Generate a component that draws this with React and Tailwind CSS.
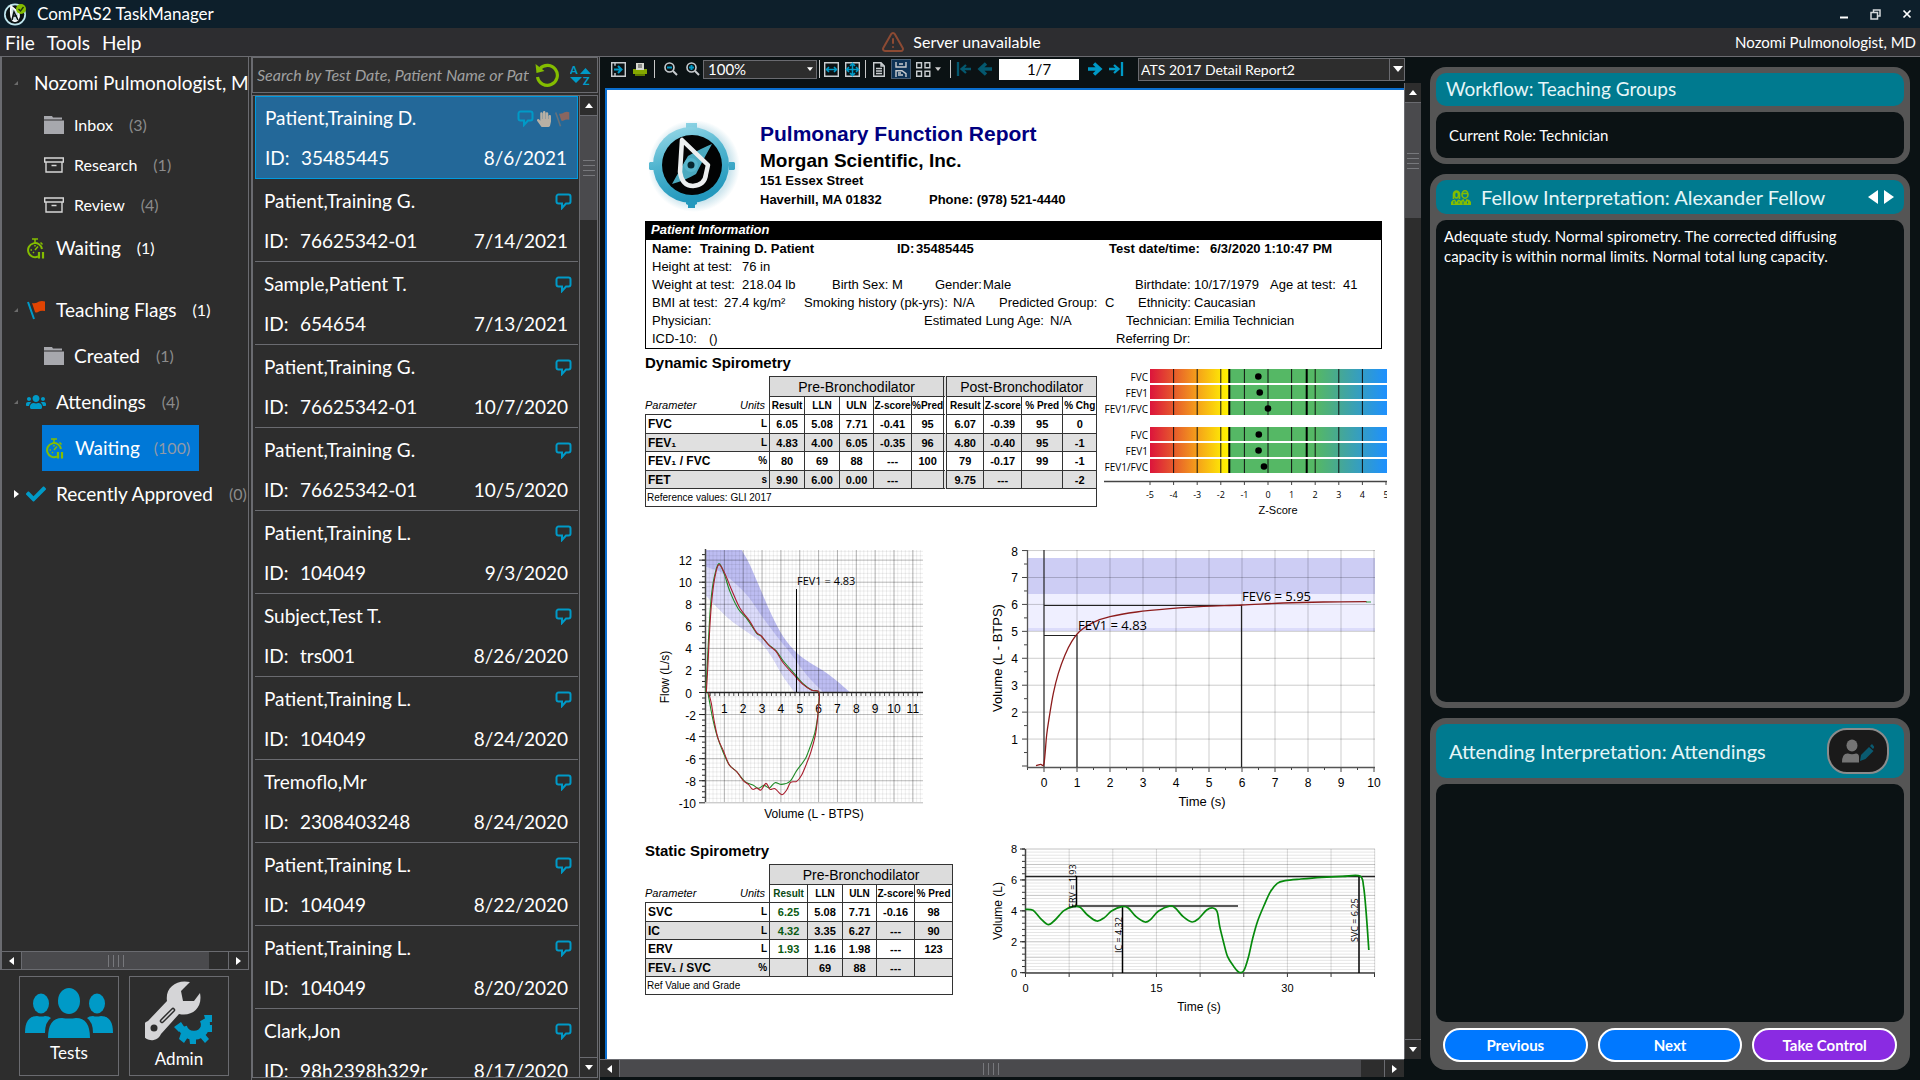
import React from "react";
import { FaCheck, FaHandPaper, FaUsers } from "react-icons/fa";
import { TriangleAlert } from "lucide-react";

/* ---------- geometry helpers for the plots ---------- */

const place = (points, ox, oy, sx, sy) => points.map(([x, y]) => [ox + x / sx, oy + y / sy]);

function smooth(points) {
  let d = `M${points[0][0]} ${points[0][1]}`;
  for (let i = 0; i < points.length - 1; i++) {
    const p0 = points[i - 1] || points[i];
    const p1 = points[i];
    const p2 = points[i + 1];
    const p3 = points[i + 2] || p2;
    d += `C${p1[0] + (p2[0] - p0[0]) / 6} ${p1[1] + (p2[1] - p0[1]) / 6} ${p2[0] - (p3[0] - p1[0]) / 6} ${p2[1] - (p3[1] - p1[1]) / 6} ${p2[0]} ${p2[1]}`;
  }
  return d;
}

const range = (from, to, step = 1) => {
  const out = [];
  for (let v = from; v <= to + 1e-6; v += step) out.push(Math.round(v * 1000) / 1000);
  return out;
};

/* ---------- icons ---------- */

function AppLogo() {
  return (
    <svg viewBox="0 0 24 24" className="size-6" aria-hidden="true">
      <circle cx="12" cy="12.500" r="11" fill="#bfe6ef" />
      <circle cx="12" cy="12.500" r="9.300" fill="#0b1214" />
      <path d="M8 4l8 7c1 6-2 9-5 8s-4-8-3-15z" fill="#cfe0e4" stroke="#fff" strokeWidth="1.500" />
      <path d="M9 18l2-8 4 8M10 14h4" fill="none" stroke="#0b1214" strokeWidth="1.500" />
      <circle cx="18" cy="7" r="5" fill="#84bd00" />
      <path d="M15.500 7l2 2 3-4" stroke="#20340a" strokeWidth="1.300" fill="none" />
    </svg>
  );
}

function ReportLogo() {
  return (
    <svg viewBox="0 0 110 105" className="w-[110px] h-[105px] shrink-0" aria-hidden="true">
      <defs>
        <linearGradient id="ring" x1="0" y1="0" x2="0.3" y2="1">
          <stop offset="0" stopColor="#9fdcea" />
          <stop offset="0.5" stopColor="#4fb4cf" />
          <stop offset="1" stopColor="#2398bd" />
        </linearGradient>
        <radialGradient id="halo">
          <stop offset="0.8" stopColor="#cfe6ee" />
          <stop offset="1" stopColor="#ffffff" />
        </radialGradient>
      </defs>
      <circle cx="54" cy="52" r="46" fill="url(#halo)" />
      <path d="M46 9h11v8H46zM46 86h11v4l-2 1v3h-7v-3l-2-1zM15 56v-8h-5l-1 1v6l1 1zM89 56v-8h5l1 1v6l-1 1z" fill="url(#ring)" />
      <circle cx="51" cy="51" r="38" fill="url(#ring)" />
      <circle cx="52" cy="51" r="30" fill="#020303" />
      <path d="M72 30Q62 34 48 42Q42 52 32 70Q46 66 56 60Q62 48 72 30z" fill="#4aa9bf" />
      <circle cx="51" cy="51" r="7" fill="#57b5cb" />
      <circle cx="51" cy="51" r="3.500" fill="#06272f" />
      <path d="M42 26L40 58Q42 72 53 72Q65 71 66 60L68 51Z" fill="none" stroke="#eceff0" strokeWidth="4.500" strokeLinejoin="round" />
    </svg>
  );
}

const ChatIcon = () => (
  <svg viewBox="0 0 17 17" className="w-[17px] h-[17px] shrink-0" aria-hidden="true">
    <path d="M3.500 1.500h10a2 2 0 0 1 2 2v5a2 2 0 0 1-2 2h-2.500l-4 4.500v-4.500h-3.500a2 2 0 0 1-2-2v-5a2 2 0 0 1 2-2z" fill="none" stroke="#009ac7" strokeWidth="2" />
  </svg>
);

const ArchiveIcon = () => (
  <svg viewBox="0 0 20 16" className="w-5 h-4" aria-hidden="true">
    <path d="M.7 1h18.600v4H.7zM2 5v10h16V5M7.500 8.500h5" fill="none" stroke="#d6d6d6" strokeWidth="1.400" />
  </svg>
);

const FolderIcon = () => (
  <svg viewBox="0 0 20 18" className="w-5 h-[18px]" aria-hidden="true">
    <path d="M0 0h8l1 1.500h9v2H0zM0 4.500h20V18H0z" fill="#a7a8ad" />
  </svg>
);

const StopwatchIcon = () => (
  <svg viewBox="0 0 18 21" className="w-[18px] h-[21px]" aria-hidden="true">
    <path d="M11 18.500A7 7 0 1 1 15 11" fill="none" stroke="#84bd00" strokeWidth="2" />
    <path d="M5 1h6M8 1v4M13.500 4.500l2 2M8 12l3-3.500M3.500 12H5M8 7v1.500M6 15l1-1" stroke="#84bd00" strokeWidth="1.500" fill="none" />
    <path d="M12 14v6.500M16 14v6.500" stroke="#84bd00" strokeWidth="2.200" />
  </svg>
);

const FlagIcon = ({ pole, cloth, size }) => (
  <svg viewBox="0 0 19 20" className={size} aria-hidden="true">
    <path d="M1 2l6 17" stroke={pole} strokeWidth="2" />
    <path d="M5 3Q9 4 12 1.500Q15 .5 18 1.500V11Q14 10 11 12Q9 13 8 12z" fill={cloth} />
  </svg>
);

const FellowsIcon = () => (
  <svg viewBox="0 0 20 15" className="w-5 h-[15px] shrink-0" aria-hidden="true">
    <g fill="none" stroke="#84bd00" strokeWidth="1.600">
      <path d="M2.500 9V4Q3 1 5.500 1T8.500 4V9" />
      <ellipse cx="5.500" cy="5" rx="2" ry="3" />
      <ellipse cx="14" cy="4.500" rx="3" ry="3.700" />
      <path d="M11 3.500h6" />
    </g>
    <path d="M0 15V12Q1 9.500 4 9.500L5.500 12L7 9.500Q9.500 9.500 10 11Q10.500 9.500 12.500 9L14 12L15.500 9Q19 9.500 20 12V15z" fill="#84bd00" />
    <path d="M3 11v3M8 11.500v2M12 11.500v3M16.500 11.500v2" stroke="#007a8f" strokeWidth="1" />
  </svg>
);

const TestsIcon = () => (
  <svg viewBox="0 0 88 50" className="w-[88px] h-[50px]" fill="#009ac7" aria-hidden="true">
    <ellipse cx="44" cy="13" rx="11" ry="13" />
    <path d="M23 50Q23 30 37 30Q44 31 51 30Q65 30 65 50z" />
    <ellipse cx="16" cy="15.500" rx="8" ry="10" />
    <path d="M0 45Q0 28 12 28Q17 29 20 28Q24 28 26 30Q20 34 20 45z" />
    <ellipse cx="72" cy="15.500" rx="8" ry="10" />
    <path d="M88 45Q88 28 76 28Q71 29 68 28Q64 28 62 30Q68 34 68 45z" />
  </svg>
);

const AdminIcon = () => (
  <svg viewBox="0 0 68 63" className="w-[68px] h-[63px]" aria-hidden="true">
    <path d="M45 1C31-2 20 7 22 20L3 40A10 10 0 1 0 16 53L34 33C47 36 58 27 55 12L49 20L38 20L36 10Z" fill="#d5d5d7" />
    <circle cx="9" cy="47" r="3.500" fill="#2d2d2d" />
    <path d="M28 29L17 40" stroke="#2d2d2d" strokeWidth="4.500" strokeLinecap="round" />
    <path d="M28 29L17 40" stroke="#d5d5d7" strokeWidth="1.500" strokeLinecap="round" />
    <path d="M37.500 46A12 12 0 0 0 60 47A12 12 0 0 0 59 38" fill="none" stroke="#009ac7" strokeWidth="9" />
    <path d="M29 46l7-5 4 6-6 4zM36 52l7 4-4 6-5-4zM44 55h7v8h-6zM54 55l5-3 5 6-4 4zM60 44h7v7h-6zM59 34h8v7h-6z" fill="#009ac7" />
  </svg>
);

const StepIcon = ({ back, bar, color }) => (
  <svg viewBox="0 0 16 14" className="w-4 h-3.5" aria-hidden="true">
    <g transform={back ? "translate(16 0) scale(-1 1)" : undefined} fill="none" stroke={color}>
      {bar ? (
        <path d="M1 7h8M6 3l4.500 4L6 11M14 0v14" strokeWidth="2.300" />
      ) : (
        <path d="M1 7h11M7 1.500L13 7l-6 5.500" strokeWidth="3.400" />
      )}
    </g>
  </svg>
);

/* ---------- scroll bars ---------- */

const TRI = {
  up: "M0 5h8L4 0z",
  down: "M0 0h8L4 5z",
  left: "M5 0v8L0 4z",
  right: "M0 0v8l5-4z",
};

const Tri = ({ dir }) => (
  <svg viewBox={dir === "up" || dir === "down" ? "0 0 8 5" : "0 0 5 8"} className={dir === "up" || dir === "down" ? "w-2 h-[5px]" : "w-[5px] h-2"} aria-hidden="true">
    <path d={TRI[dir]} fill="#fff" />
  </svg>
);

function VScroll({ width, thumb }) {
  return (
    <div className={`${width} shrink-0 flex flex-col bg-[#2d2d2d] border-l border-[#6a6b70]`}>
      <button aria-label="Scroll up" className="h-5 flex items-center justify-center border-b border-[#6a6b70]"><Tri dir="up" /></button>
      <div className="flex-1">
        <div className={`${thumb} bg-[#4a4a4d] flex flex-col items-center justify-center gap-1`}>
          {range(1, 4).map((i) => <span key={i} className="w-3 h-px bg-[#77787c]" />)}
        </div>
      </div>
      <button aria-label="Scroll down" className="h-5 flex items-center justify-center border-t border-[#6a6b70]"><Tri dir="down" /></button>
    </div>
  );
}

function HScroll({ thumb }) {
  return (
    <div className="h-[18px] shrink-0 flex bg-[#2d2d2d] border-t border-[#6a6b70]">
      <button aria-label="Scroll left" className="w-5 flex items-center justify-center border-r border-[#6a6b70]"><Tri dir="left" /></button>
      <div className="flex-1 flex">
        <div className={`${thumb} bg-[#4a4a4d] flex items-center justify-center gap-1`}>
          {range(1, 4).map((i) => <span key={i} className="h-3 w-px bg-[#77787c]" />)}
        </div>
      </div>
      <button aria-label="Scroll right" className="w-5 flex items-center justify-center border-l border-[#6a6b70]"><Tri dir="right" /></button>
    </div>
  );
}

/* ---------- left column ---------- */

function TreeRow({ indent, height = "h-[46px]", icon, label, count, small, bright, mark }) {
  return (
    <div className={`${height} flex items-center whitespace-nowrap`}>
      <span className="w-4 ml-2 pl-1 shrink-0 flex">
        {mark === "open" && <svg viewBox="0 0 4 4" className="size-1"><path d="M4 0v4H0z" fill="#6b6b6b" /></svg>}
        {mark === "closed" && <Tri dir="right" />}
      </span>
      {icon && <span className={`${indent} w-6 shrink-0 flex justify-center`}>{icon}</span>}
      <span className={`ml-2 ${small ? "text-base" : "text-[19px]"}`}>{label}</span>
      {count && <span className={`ml-4 ${bright ? "text-white" : "text-[#8b8b8b]"} text-base`}>{count}</span>}
    </div>
  );
}

function Sidebar() {
  return (
    <aside className="w-[251px] shrink-0 flex flex-col bg-[#2d2d2d]">
      <nav className="flex-1 min-h-0 flex flex-col border-l-2 border-r border-b border-[#6a6b70] overflow-hidden mr-0.5">
        <div className="flex-1 pt-1 overflow-hidden">
          <TreeRow height="h-11" mark="open" label="Nozomi Pulmonologist, MD" />
          <TreeRow indent="ml-4" height="h-10" icon={<FolderIcon />} label="Inbox" count="(3)" small />
          <TreeRow indent="ml-4" height="h-10" icon={<ArchiveIcon />} label="Research" count="(1)" small />
          <TreeRow indent="ml-4" height="h-10" icon={<ArchiveIcon />} label="Review" count="(4)" small />
          <TreeRow indent="-ml-0.5" icon={<StopwatchIcon />} label="Waiting" count="(1)" bright />
          <div className="h-4" />
          <TreeRow mark="open" indent="-ml-0.5" icon={<FlagIcon pole="#009ac7" cloth="#e04403" size="w-[19px] h-5" />} label="Teaching Flags" count="(1)" bright />
          <TreeRow indent="ml-4" icon={<FolderIcon />} label="Created" count="(1)" />
          <TreeRow mark="open" indent="-ml-0.5" icon={<FaUsers className="size-5 text-[#009ac7]" />} label="Attendings" count="(4)" />
          <div className="ml-10 w-[157px] h-[46px] bg-[#0078d7] flex items-center pl-1 whitespace-nowrap">
            <StopwatchIcon />
            <span className="ml-[11px] text-[19px]">Waiting</span>
            <span className="ml-3.5 text-base text-[#8f9aa8]">(100)</span>
          </div>
          <TreeRow mark="closed" indent="-ml-0.5" icon={<FaCheck className="size-5 text-[#009ac7]" />} label="Recently Approved" count="(0)" />
        </div>
        <HScroll thumb="w-[91%]" />
      </nav>
      <div className="h-[110px] shrink-0 flex gap-2.5 pt-1.5 pl-[19px]">
        <button className="w-[100px] h-[100px] border border-[#6a6b70] flex flex-col items-center pt-[11px] text-[17px]">
          <TestsIcon />
          <span className="mt-0.5">Tests</span>
        </button>
        <button className="w-[100px] h-[100px] border border-[#6a6b70] flex flex-col items-center pt-1 text-[17px]">
          <AdminIcon />
          <span className="mt-0.5">Admin</span>
        </button>
      </div>
    </aside>
  );
}

/* ---------- patient list ---------- */

const PATIENTS = [
  ["Patient,Training D.", "35485445", "8/6/2021"],
  ["Patient,Training G.", "76625342-01", "7/14/2021"],
  ["Sample,Patient T.", "654654", "7/13/2021"],
  ["Patient,Training G.", "76625342-01", "10/7/2020"],
  ["Patient,Training G.", "76625342-01", "10/5/2020"],
  ["Patient,Training L.", "104049", "9/3/2020"],
  ["Subject,Test T.", "trs001", "8/26/2020"],
  ["Patient,Training L.", "104049", "8/24/2020"],
  ["Tremoflo,Mr", "2308403248", "8/24/2020"],
  ["Patient,Training L.", "104049", "8/22/2020"],
  ["Patient,Training L.", "104049", "8/20/2020"],
  ["Clark,Jon", "98h2398h329r", "8/17/2020"],
];

function PatientList() {
  return (
    <section className="w-[348px] shrink-0 flex flex-col bg-[#2d2d2d] border-l border-[#6a6b70] pb-0.5 pr-px">
      <div className="h-9 shrink-0 flex items-center border border-[#6a6b70] pl-1 pr-1.5">
        <input aria-label="Search" placeholder="Search by Test Date, Patient Name or Patient ID" className="flex-1 min-w-0 bg-transparent italic text-base text-white placeholder:text-[#a0a0a0] outline-none" />
        <button aria-label="Refresh" className="ml-1.5">
          <svg viewBox="0 0 24 24" className="size-6"><path d="M5 5.500A10 10 0 1 1 2.500 14" fill="none" stroke="#84bd00" strokeWidth="3.200" /><path d="M.5 1l1 9 8-2z" fill="#84bd00" /></svg>
        </button>
        <button aria-label="Sort" className="ml-[11px]">
          <svg viewBox="0 0 21 21" className="size-[21px]">
            <text x="0" y="9" fontSize="11" fontWeight="900" fill="#009ac7" fontFamily="Lato">A</text>
            <text x="13" y="20" fontSize="11" fontWeight="900" fill="#009ac7" fontFamily="Lato">Z</text>
            <path d="M10 9h11l-5.500-6zM0 12h12l-6 6z" fill="#009ac7" />
          </svg>
        </button>
      </div>
      <div className="mt-0.5 flex-1 min-h-0 flex border border-[#6a6b70]">
        <ul className="flex-1 min-w-0 overflow-hidden pl-0.5 pr-px">
          {PATIENTS.map(([name, id, date], i) => (
            <li key={i}>
              <button className={`w-full h-[83px] block text-left text-[19px] pl-[9px] pr-2.5 ${i === 0 ? "pt-0.5 bg-[#236899] border border-[#009be0]" : "pt-[3px] border-b border-[#6a6b70]"}`}>
                <span className="h-8 flex items-center justify-between">
                  <span>{name}</span>
                  <span className="flex items-center gap-0.5 -mr-1">
                    <ChatIcon />
                    {i === 0 && <FaHandPaper className="size-4 text-[#b8b0a4]" />}
                    {i === 0 && <FlagIcon pole="#65727c" cloth="#8a6660" size="w-[17px] h-4" />}
                  </span>
                </span>
                <span className="mt-2 h-8 flex items-center">
                  <span className="w-9">ID:</span>
                  <span className="flex-1">{id}</span>
                  <span>{date}</span>
                </span>
              </button>
            </li>
          ))}
        </ul>
        <VScroll width="w-[18px]" thumb="h-[104px]" />
      </div>
    </section>
  );
}

/* ---------- toolbar ---------- */

const Sep = ({ gap }) => <span className={`w-px h-[18px] bg-[#c8c8c8] ${gap}`} />;

function Toolbar() {
  return (
    <div className="h-6 mb-0.5 shrink-0 flex items-center pl-[11px] text-[15px] whitespace-nowrap">
      <button aria-label="Toggle panel">
        <svg viewBox="0 0 15 15" className="size-[15px]"><path d="M.7.700h13.600v13.600H.7zM4 .7v3M4 11v3" fill="none" stroke="#c9cdd0" strokeWidth="1.400" /><path d="M3 7.500h7M7 4l3.500 3.500L7 11" fill="none" stroke="#009ac7" strokeWidth="2" /></svg>
      </button>
      <button aria-label="Print" className="ml-[7px]">
        <svg viewBox="0 0 14 14" className="size-3.5"><path d="M0 7h14v5H0z" fill="#84a800" /><path d="M3 1h8v7H3z" fill="#d7d9d0" /><path d="M5 3h4M5 5h4" stroke="#444" /><path d="M2 12h10v2H2z" fill="#5d7a00" /></svg>
      </button>
      <Sep gap="mx-[7px]" />
      <button aria-label="Zoom out" className="ml-0.5">
        <svg viewBox="0 0 14 14" className="size-3.5"><circle cx="5.500" cy="5.500" r="4.500" fill="none" stroke="#c9cdd0" strokeWidth="1.600" /><path d="M9 9l4 4" stroke="#c9cdd0" strokeWidth="2" /><path d="M3 5.500h5" stroke="#009ac7" strokeWidth="2" /></svg>
      </button>
      <button aria-label="Zoom in" className="ml-2">
        <svg viewBox="0 0 14 14" className="size-3.5"><circle cx="5.500" cy="5.500" r="4.500" fill="none" stroke="#c9cdd0" strokeWidth="1.600" /><path d="M9 9l4 4" stroke="#c9cdd0" strokeWidth="2" /><path d="M3 5.500h5M5.500 3v5" stroke="#009ac7" strokeWidth="2" /></svg>
      </button>
      <span className="ml-[3px] relative">
        <select aria-label="Zoom level" className="appearance-none block w-[114px] h-[19px] leading-[17px] pl-1 bg-[#2d2d2d] border border-[#6a6b70] outline-none">
          <option>100%</option>
        </select>
        <span className="absolute right-1 top-0 h-full flex items-center pointer-events-none"><svg viewBox="0 0 8 5" className="w-1.5 h-1"><path d="M0 0h8L4 5z" fill="#fff" /></svg></span>
      </span>
      <Sep gap="ml-0.5 mr-1" />
      <button aria-label="Fit width">
        <svg viewBox="0 0 15 15" className="size-[15px]"><path d="M.7.700h13.600v13.600H.7z" fill="none" stroke="#c9cdd0" strokeWidth="1.400" /><path d="M2 7.500h11M5 5L2.500 7.500 5 10M10 5l2.500 2.500L10 10" fill="none" stroke="#009ac7" strokeWidth="1.600" /></svg>
      </button>
      <button aria-label="Fit page" className="ml-1.5">
        <svg viewBox="0 0 15 15" className="size-[15px]"><path d="M.7.700h13.600v13.600H.7z" fill="none" stroke="#c9cdd0" strokeWidth="1.400" /><path d="M1 7.500h13M7.500 1v13M4 5L1.500 7.500 4 10M11 5l2.500 2.500L11 10M5 4l2.500-2.500L10 4M5 11l2.500 2.500L10 11" fill="none" stroke="#009ac7" strokeWidth="1.600" /></svg>
      </button>
      <Sep gap="ml-[5px] mr-[7px]" />
      <button aria-label="Single page">
        <svg viewBox="0 0 12 15" className="w-3 h-[15px]"><path d="M.7.700H8l3.300 3.300v10.300H.7zM8 .7V4h3M3 6.500h6M3 9h6M3 11.500h6" fill="none" stroke="#c9cdd0" strokeWidth="1.400" /></svg>
      </button>
      <button aria-label="Continuous pages" aria-pressed="true" className="ml-1.5 w-5 h-5 flex items-center justify-center bg-[#0d3357] border border-[#4a5f75]">
        <svg viewBox="0 0 12 15" className="w-3 h-[15px]"><path d="M1 0v5h10V0M4 2h4M1 15V8.700h6l4 3V15M3 11h3M3 13h5" fill="none" stroke="#c9cdd0" strokeWidth="1.400" /></svg>
      </button>
      <button aria-label="Multiple pages" className="ml-[5px] flex items-center gap-1">
        <svg viewBox="0 0 15 15" className="size-[15px]"><path d="M.7.700h4.800v5H.7zM9 .7h4.800v5H9zM.7 9.300h4.800v5H.7zM9 9.300h4.800v5H9z" fill="none" stroke="#c9cdd0" strokeWidth="1.400" /></svg>
        <svg viewBox="0 0 8 5" className="w-1.5 h-1"><path d="M0 0h8L4 5z" fill="#ccc" /></svg>
      </button>
      <Sep gap="ml-[9px] mr-[5px]" />
      <button aria-label="First page"><StepIcon back bar color="#04586f" /></button>
      <button aria-label="Previous page" className="ml-[5px]"><StepIcon back color="#04586f" /></button>
      <input aria-label="Page" defaultValue="1/7" className="ml-1.5 w-20 h-[21px] bg-white text-black text-center outline-none" />
      <button aria-label="Next page" className="ml-2"><StepIcon color="#009ac7" /></button>
      <button aria-label="Last page" className="ml-[5px]"><StepIcon bar color="#009ac7" /></button>
      <span className="ml-3.5 flex-1 mr-4 relative">
        <select aria-label="Report" className="appearance-none block w-full h-[23px] leading-[21px] pl-0.5 text-sm bg-[#2d2d2d] border border-[#6a6b70] outline-none">
          <option>ATS 2017 Detail Report2</option>
        </select>
        <span className="absolute right-0 top-0 h-full w-4 border-l border-[#6a6b70] flex items-center justify-center pointer-events-none"><svg viewBox="0 0 10 6" className="w-2.5 h-1.5"><path d="M0 0h10L5 6z" fill="#fff" /></svg></span>
      </span>
    </div>
  );
}

/* ---------- report ---------- */

const InfoRow = ({ cells, bold }) => (
  <div className={`h-[18px] flex items-center pl-1.5 whitespace-nowrap ${bold ? "font-bold" : ""}`}>
    {cells.map(([w, t], i) => <span key={i} className={w}>{t}</span>)}
  </div>
);

const DYNAMIC = [
  ["FVC", "L", "6.05", "5.08", "7.71", "-0.41", "95", "6.07", "-0.39", "95", "0"],
  ["FEV₁", "L", "4.83", "4.00", "6.05", "-0.35", "96", "4.80", "-0.40", "95", "-1"],
  ["FEV₁ / FVC", "%", "80", "69", "88", "---", "100", "79", "-0.17", "99", "-1"],
  ["FET", "s", "9.90", "6.00", "0.00", "---", "", "9.75", "---", "", "-2"],
];

const STATIC = [
  ["SVC", "L", "6.25", "5.08", "7.71", "-0.16", "98"],
  ["IC", "L", "4.32", "3.35", "6.27", "---", "90"],
  ["ERV", "L", "1.93", "1.16", "1.98", "---", "123"],
  ["FEV₁ / SVC", "%", "", "69", "88", "---", ""],
];

const edge = "border-[#333]";

function ResultTable({ widths, groups, heads, rows, foot, greenFirst }) {
  const gapAfter = groups.length > 1 ? groups[0][1] + 1 : -1;
  const cellEdge = (c) => (c === gapAfter ? `border-r-4 border-double ${edge}` : `border-r ${edge}`);
  return (
    <table className="table-fixed border-separate border-spacing-0 text-black">
      <colgroup>{widths.map((w, i) => <col key={i} className={w} />)}</colgroup>
      <thead>
        <tr className="h-5 text-sm leading-4">
          <td colSpan="2" className={`border-r ${edge}`} />
          {groups.map(([title, span], g) => (
            <th key={g} colSpan={span} className={`p-0 font-normal bg-[#dcdcdc] border-t ${edge} ${g === 0 && groups.length > 1 ? "border-r-4 border-double" : "border-r"}`}>{title}</th>
          ))}
        </tr>
        <tr className="h-[19px] text-[10px] leading-[14px]">
          <th className={`p-0 text-left text-[11px] font-normal italic border-b ${edge}`}>Parameter</th>
          <th className={`p-0 pr-1 text-right text-[11px] font-normal italic border-b border-r ${edge}`}>Units</th>
          {heads.map((h, i) => (
            <th key={i} className={`p-0 font-bold whitespace-nowrap border-t border-b ${cellEdge(i + 2)} ${greenFirst && i === 0 ? "text-[#0a4a12]" : ""}`}>{h}</th>
          ))}
        </tr>
      </thead>
      <tbody>
        {rows.map((r, ri) => (
          <tr key={ri} className={`text-[11px] leading-4 font-bold ${ri % 2 ? "h-[18px] bg-[#e0e0e0]" : "h-[19px]"}`}>
            {r.map((v, c) => (
              <td key={c} className={`p-0 border-b ${c === 0 ? `border-l pl-0.5 text-xs ${edge} whitespace-nowrap` : c === 1 ? `pr-0.5 text-right text-[10px] border-r ${edge}` : `text-center ${cellEdge(c)} ${greenFirst && c === 2 ? "text-[#0a5a12]" : ""}`}`}>{v}</td>
            ))}
          </tr>
        ))}
        <tr className="h-[18px] text-[10px] leading-4">
          <td colSpan={widths.length} className={`p-0 pl-px border-b border-x ${edge}`}>{foot}</td>
        </tr>
      </tbody>
    </table>
  );
}

const ARIAL = "Liberation Sans, Arial, sans-serif";

function ZScoreChart() {
  const x = (z) => 1268 + z * 23.6;
  const bars = [[369, "FVC", -0.41], [385, "FEV1", -0.35], [401, "FEV1/FVC", 0], [427, "FVC", -0.39], [443, "FEV1", -0.4], [459, "FEV1/FVC", -0.17]];
  return (
    <svg viewBox="1104 353 283 167" className="w-[283px] h-[167px] shrink-0" fontFamily="Open Sans, Noto Sans, sans-serif">
      <defs>
        <linearGradient id="z">
          <stop offset="0" stopColor="#dc143c" />
          <stop offset="0.1" stopColor="#e65a2c" />
          <stop offset="0.2" stopColor="#f5a11a" />
          <stop offset="0.3" stopColor="#fde406" />
          <stop offset="0.336" stopColor="#fff200" />
          <stop offset="0.336" stopColor="#55b865" />
          <stop offset="0.7" stopColor="#55b865" />
          <stop offset="0.8" stopColor="#46a894" />
          <stop offset="1" stopColor="#1e90ff" />
        </linearGradient>
      </defs>
      {bars.map(([y, name, z], i) => (
        <g key={i}>
          <rect x={x(-5)} y={y} width="237" height="14" fill="url(#z)" />
          {range(-4, 4).map((t) => <path key={t} d={`M${x(t)} ${y}v14`} stroke="#111" strokeWidth="1" />)}
          <path d={`M${x(-1.64)} ${y}v14M${x(1.64)} ${y}v14`} stroke="#000" strokeWidth="2" />
          <circle cx={x(z)} cy={y + 7.500} r="3.300" fill="#000" />
          <text x="1148" y={y + 12} fontSize="10" textAnchor="end">{name}</text>
        </g>
      ))}
      <path d="M1104 481.500H1387" stroke="#444" strokeWidth="1.500" />
      {range(-5, 5).map((t) => (
        <g key={t}>
          <path d={`M${Math.min(x(t), 1386)} 481v4`} stroke="#444" />
          <text x={x(t)} y="498" fontSize="9" textAnchor="middle">{t}</text>
        </g>
      ))}
      <text x="1278" y="514" fontSize="11" textAnchor="middle" fontFamily={ARIAL}>Z-Score</text>
    </svg>
  );
}

function FlowVolumeChart() {
  const x = (v) => 705.5 + v * 18.85;
  const y = (f) => 692.5 - f * 11.03;
  const at = (p) => place(p, 640, 530, 3, 3);
  const upper = smooth(at([[305, 60], [330, 105], [360, 175], [395, 255], [430, 320], [470, 368], [510, 398], [550, 422], [590, 452], [630, 487]]));
  const mid = smooth(at([[196, 110], [240, 125], [280, 155], [325, 200], [370, 265], [415, 325], [455, 375], [500, 435], [550, 487]]));
  const low = smooth(at([[465, 487], [430, 440], [395, 380], [360, 335], [310, 298], [260, 260], [196, 195]]));
  const green = smooth(at([[197, 487], [202, 400], [207, 300], [213, 210], [222, 145], [236, 101], [252, 130], [270, 185], [295, 237], [322, 268], [350, 310], [362, 317], [385, 343], [408, 362], [430, 393], [462, 430], [490, 462], [515, 480], [537, 486], [537, 510], [533, 560], [524, 610], [505, 665], [495, 688], [470, 722], [450, 754], [425, 763], [405, 758], [388, 774], [372, 766], [355, 775], [340, 766], [315, 755], [290, 725], [268, 705], [250, 668], [232, 620], [218, 565], [208, 512], [204, 488]]));
  const red = smooth(at([[199, 487], [204, 400], [209, 300], [215, 215], [224, 145], [236, 104], [254, 130], [275, 180], [300, 235], [328, 272], [350, 308], [364, 318], [387, 346], [408, 364], [430, 399], [462, 435], [490, 464], [515, 481], [537, 487], [535, 540], [527, 610], [513, 665], [500, 700], [485, 735], [470, 754], [452, 757], [440, 780], [425, 794], [405, 776], [390, 778], [378, 760], [363, 780], [350, 774], [338, 778], [325, 763], [310, 752], [290, 725], [268, 705], [250, 662], [234, 625], [222, 570], [214, 520], [206, 488]]));
  return (
    <svg viewBox="645 540 330 290" className="w-[330px] h-[290px] shrink-0" fontFamily={ARIAL}>
      <path d={`${upper}L705.500 692.500V550Z`} fill="#bdbdf2" />
      <path d={`${mid}${low.replace("M", "L")}Z`} fill="#dcdcfb" />
      <path d={`${low}L705.500 692.500Z`} fill="#fff" />
      {range(0, 11.5, 0.2).map((v) => <path key={v} d={`M${x(v)} 550V802`} stroke="#000" strokeOpacity="0.07" />)}
      {range(-10, 12.8, 0.4).map((f) => <path key={f} d={`M705 ${y(f)}H923`} stroke="#000" strokeOpacity="0.07" />)}
      {range(1, 11).map((v) => <path key={v} d={`M${x(v)} 550V802`} stroke="#000" strokeOpacity="0.25" />)}
      {range(-10, 12, 2).map((f) => (
        <g key={f}>
          <path d={`M705 ${y(f)}H923`} stroke="#000" strokeOpacity="0.22" />
          <path d={`M699 ${y(f)}h6`} stroke="#222" />
          <text x={f < 0 ? 696 : 692} y={y(f) + 5} fontSize="12" textAnchor="end">{f}</text>
        </g>
      ))}
      {range(-9.5, 12.5, 0.5).map((f) => <path key={f} d={`M702 ${y(f)}h3`} stroke="#222" />)}
      {range(0.25, 11.25, 0.25).map((v) => <path key={v} d={`M${x(v)} 692v4`} stroke="#222" strokeWidth="0.800" />)}
      <path d="M705.500 549V802" stroke="#444" strokeWidth="1.500" />
      <path d="M705 692.500H923" stroke="#222" strokeWidth="1.500" />
      {range(1, 11).map((v) => <text key={v} x={x(v)} y="713" fontSize="12" textAnchor="middle">{v}</text>)}
      <path d={green} fill="none" stroke="#1f8a26" strokeWidth="1.100" />
      <path d={red} fill="none" stroke="#a81e2e" strokeWidth="1.100" />
      <path d="M796.500 589V692" stroke="#000" />
      <text x="797" y="585" fontSize="11" fontFamily="Open Sans, Noto Sans, sans-serif">FEV1 = 4.83</text>
      <text x="814" y="818" fontSize="12" textAnchor="middle">Volume (L - BTPS)</text>
      <text transform="translate(669 677) rotate(-90)" fontSize="12" textAnchor="middle">Flow (L/s)</text>
    </svg>
  );
}

function VolumeTimeChart() {
  const x = (t) => 1044 + t * 33;
  const y = (v) => 766 - v * 26.93;
  const curve = smooth(place([[198, 707], [212, 703], [222, 700], [230, 615], [238, 560], [250, 490], [265, 430], [285, 375], [305, 335], [330, 303], [370, 277], [420, 260], [500, 246], [600, 236], [700, 229], [815, 225], [940, 219], [1060, 216], [1190, 215]], 970, 530, 3, 3));
  return (
    <svg viewBox="975 540 430 290" className="w-[430px] h-[290px] shrink-0" fontFamily={ARIAL}>
      <rect x="1027" y="558" width="348" height="36" fill="#cdcdf4" />
      <rect x="1027" y="594" width="348" height="37" fill="#efefff" />
      <rect x="1027" y="628" width="348" height="3" fill="#dcdcfb" />
      {range(1, 8).map((v) => (
        <g key={v}>
          <path d={`M1027 ${y(v)}H1375`} stroke="#000" strokeOpacity="0.2" />
          <text x="1018" y={y(v) + 5} fontSize="12" textAnchor="end">{v}</text>
        </g>
      ))}
      {range(1, 10).map((t) => <path key={t} d={`M${x(t)} 550V767`} stroke="#000" strokeOpacity="0.2" />)}
      {range(0, 8, 0.5).map((v) => <path key={v} d={`M${v % 1 ? 1024 : 1022} ${y(v)}H1027`} stroke="#444" />)}
      {range(-0.5, 10, 0.5).map((t) => <path key={t} d={`M${x(t)} 767v${t % 1 ? 3 : 5}`} stroke="#444" />)}
      <path d="M1027.500 550V767.500H1375" fill="none" stroke="#555" strokeWidth="1.300" />
      <path d="M1044 550V767M1044 605.500H1241.500V767M1044 635.500H1077V767" fill="none" stroke="#222" strokeWidth="1.200" />
      <path d={curve} fill="none" stroke="#8c1c1c" strokeWidth="1.300" />
      <path d="M1366 602h5" stroke="#2f9a3a" />
      {range(0, 10).map((t) => <text key={t} x={x(t)} y="787" fontSize="12" textAnchor="middle">{t}</text>)}
      <text x="1202" y="806" fontSize="13" textAnchor="middle">Time (s)</text>
      <text transform="translate(1002 658) rotate(-90)" fontSize="13" textAnchor="middle">Volume (L - BTPS)</text>
      <g fontFamily="Open Sans, Noto Sans, sans-serif" fontSize="13">
        <text x="1078" y="630">FEV1 = 4.83</text>
        <text x="1242" y="601">FEV6 = 5.95</text>
      </g>
    </svg>
  );
}

function StaticChart() {
  const x = (t) => 1025.5 + t * 8.73;
  const y = (v) => 972.7 - v * 15.46;
  const curve = smooth(place([[813, 238], [828, 241], [842, 265], [857, 284], [870, 270], [887, 242], [905, 230], [918, 232], [932, 255], [950, 273], [965, 262], [978, 243], [998, 230], [1010, 234], [1025, 260], [1042, 276], [1053, 268], [1068, 243], [1090, 228], [1100, 234], [1115, 260], [1132, 276], [1145, 265], [1160, 240], [1172, 234], [1180, 245], [1185, 290], [1192, 335], [1200, 380], [1212, 410], [1222, 427], [1231, 422], [1240, 380], [1248, 325], [1257, 275], [1270, 225], [1282, 185], [1295, 160], [1310, 152], [1340, 147], [1380, 142], [1420, 139], [1453, 138], [1460, 170], [1465, 250], [1470, 360]], 600, 830, 1.912, 3));
  return (
    <svg viewBox="975 840 430 185" className="w-[430px] h-[185px] shrink-0" fontFamily={ARIAL}>
      {range(0, 8, 0.2).map((v) => <path key={v} d={`M1025 ${y(v)}H1375`} stroke="#000" strokeOpacity="0.1" />)}
      {range(0, 8, 1).map((v) => <path key={v} d={`M1025 ${y(v)}H1375`} stroke="#000" strokeOpacity="0.15" />)}
      {range(5, 40, 5).map((t) => <path key={t} d={`M${x(t)} 849V973`} stroke="#000" strokeOpacity="0.15" />)}
      {range(0, 8, 0.4).map((v) => <path key={v} d={`M1022 ${y(v)}h3`} stroke="#333" />)}
      {range(0, 8, 2).map((v) => (
        <g key={v}>
          <path d={`M1020 ${y(v)}h5`} stroke="#222" />
          <text x="1017" y={y(v) + 4} fontSize="11" textAnchor="end">{v}</text>
        </g>
      ))}
      {range(0, 40, 5).map((t) => <path key={t} d={`M${Math.min(x(t), 1374.5)} 973v4`} stroke="#333" />)}
      <path d="M1025.500 849V973H1375" fill="none" stroke="#444" strokeWidth="1.500" />
      <path d="M1025 876.500H1375M1072 906H1238" stroke="#222" strokeWidth="1.300" />
      <path d="M1076.500 876V906M1122.500 906V973M1359 876V973" stroke="#000" strokeWidth="1.500" />
      <path d={curve} fill="none" stroke="#068a0c" strokeWidth="1.700" />
      <g fontFamily="Open Sans, Noto Sans, sans-serif" fontSize="9">
        <text transform="translate(1076 908) rotate(-90)">ERV = 1.93</text>
        <text transform="translate(1122 953) rotate(-90)">IC = 4.32</text>
        <text transform="translate(1358 942) rotate(-90)">SVC = 6.25</text>
      </g>
      {[0, 15, 30].map((t) => <text key={t} x={x(t)} y="992" fontSize="11" textAnchor="middle">{t}</text>)}
      <text x="1199" y="1011" fontSize="12" textAnchor="middle">Time (s)</text>
      <text transform="translate(1002 911) rotate(-90)" fontSize="12" textAnchor="middle">Volume (L)</text>
    </svg>
  );
}

function Report() {
  return (
    <article className="flex-1 min-w-0 overflow-hidden bg-white text-black font-['Liberation_Sans',Arial,sans-serif] text-xs pl-[38px] border-t-2 border-l-2 border-[#0a6fd0]">
      <header className="h-[131px] pt-6 flex">
        <div className="-ml-[5px] w-[120px] shrink-0"><ReportLogo /></div>
        <div className="font-bold pt-1.5 whitespace-nowrap text-[13px]">
          <h1 className="text-[21px] leading-7 text-[#000080]">Pulmonary Function Report</h1>
          <h2 className="text-[19px] leading-[26px]">Morgan Scientific, Inc.</h2>
          <p className="leading-[14px]">151 Essex Street</p>
          <p className="flex leading-6"><span className="w-[169px]">Haverhill, MA 01832</span><span>Phone: (978) 521-4440</span></p>
        </div>
      </header>

      <section className="w-[737px] text-[13px] leading-[18px]">
        <h3 className="h-[18px] bg-black text-white italic font-bold pl-1.5">Patient Information</h3>
        <div className="border border-black">
          <InfoRow bold cells={[["w-12", "Name:"], ["w-[197px]", "Training D. Patient"], ["w-[19px]", "ID:"], ["w-[193px]", "35485445"], ["w-[101px]", "Test date/time:"], ["", "6/3/2020 1:10:47 PM"]]} />
          <InfoRow cells={[["w-[90px]", "Height at test:"], ["", "76 in"]]} />
          <InfoRow cells={[["w-[90px]", "Weight at test:"], ["w-[90px]", "218.04 lb"], ["w-[60px]", "Birth Sex:"], ["w-[43px]", "M"], ["w-12", "Gender:"], ["w-[152px]", "Male"], ["w-[59px]", "Birthdate:"], ["w-[76px]", "10/17/1979"], ["w-[73px]", "Age at test:"], ["", "41"]]} />
          <InfoRow cells={[["w-[72px]", "BMI at test:"], ["w-20", "27.4 kg/m²"], ["w-[149px]", "Smoking history (pk-yrs):"], ["w-[46px]", "N/A"], ["w-[106px]", "Predicted Group:"], ["w-[33px]", "C"], ["w-14", "Ethnicity:"], ["", "Caucasian"]]} />
          <InfoRow cells={[["w-[272px]", "Physician:"], ["w-[126px]", "Estimated Lung Age:"], ["w-[76px]", "N/A"], ["w-[68px]", "Technician:"], ["", "Emilia Technician"]]} />
          <InfoRow cells={[["w-[57px]", "ICD-10:"], ["w-[407px]", "()"], ["", "Referring Dr:"]]} />
        </div>
      </section>

      <section className="flex mt-1">
        <div className="w-[459px] shrink-0">
          <h3 className="h-[23px] text-[15px] leading-5 font-bold">Dynamic Spirometry</h3>
          <ResultTable
            widths={["w-[95px]", "w-[30px]", "w-[35px]", "w-[35px]", "w-[34px]", "w-[38px]", "w-[34px]", "w-[37px]", "w-[38px]", "w-[41px]", "w-[34px]"]}
            groups={[["Pre-Bronchodilator", 5], ["Post-Bronchodilator", 4]]}
            heads={["Result", "LLN", "ULN", "Z-score", "%Pred", "Result", "Z-score", "% Pred", "% Chg"]}
            rows={DYNAMIC}
            foot="Reference values: GLI 2017"
          />
        </div>
        <ZScoreChart />
      </section>

      <section className="flex mt-5">
        <FlowVolumeChart />
        <VolumeTimeChart />
      </section>

      <section className="flex mt-2.5">
        <div className="w-[330px] pt-px shrink-0">
          <h3 className="h-[23px] text-[15px] leading-5 font-bold">Static Spirometry</h3>
          <ResultTable
            widths={["w-[95px]", "w-[29px]", "w-[38px]", "w-[35px]", "w-[34px]", "w-[38px]", "w-[38px]"]}
            groups={[["Pre-Bronchodilator", 5]]}
            heads={["Result", "LLN", "ULN", "Z-score", "% Pred"]}
            rows={STATIC}
            foot="Ref Value and Grade"
            greenFirst
          />
        </div>
        <StaticChart />
      </section>
    </article>
  );
}

function Viewer() {
  return (
    <section className="flex-1 min-w-0 flex flex-col bg-[#0b1214] border-l border-[#6a6b70] pb-[3px]">
      <Toolbar />
      <div className="flex-1 min-h-0 flex">
        <div className="flex-1 min-w-0 flex pl-[5px] pt-[5px]"><Report /></div>
        <VScroll width="w-[17px]" thumb="h-[115px]" />
      </div>
      <div className="pr-[17px]"><HScroll thumb="w-[97%]" /></div>
    </section>
  );
}

/* ---------- right column ---------- */

const Card = ({ className, children }) => (
  <section className={`bg-[#555] rounded-2xl p-1.5 flex flex-col gap-1.5 ${className}`}>{children}</section>
);

function RightColumn() {
  return (
    <aside className="w-[499px] shrink-0 bg-[#0b1214] flex flex-col gap-2.5 pl-[9px] pr-2.5 pt-2.5 pb-2.5">
      <Card className="h-[97px]">
        <h2 className="h-[33px] rounded-[10px] bg-[#007a8f] px-2.5 pt-0.5 text-[19px] leading-7 text-[#e6f6f8]">Workflow: Teaching Groups</h2>
        <div className="flex-1 rounded-[10px] bg-[#0b1214] flex items-center px-[13px] text-[15px]">Current Role: Technician</div>
      </Card>
      <Card className="flex-1">
        <div className="h-[34px] shrink-0 rounded-[10px] bg-[#007a8f] flex items-center pl-[15px] pr-2.5 text-xl text-[#e6f6f8]">
          <FellowsIcon />
          <h2 className="ml-2.5 flex-1">Fellow Interpretation: Alexander Fellow</h2>
          <button aria-label="Previous interpretation"><svg viewBox="0 0 10 16" className="w-2.5 h-4"><path d="M10 1v14L0 8z" fill="#fff" /></svg></button>
          <button aria-label="Next interpretation" className="ml-1.5"><svg viewBox="0 0 10 16" className="w-2.5 h-4"><path d="M0 1v14l10-7z" fill="#fff" /></svg></button>
        </div>
        <p className="flex-1 rounded-[10px] bg-[#0b1214] px-2 pt-1.5 text-[15px] leading-5">
          Adequate study. Normal spirometry. The corrected diffusing<br />capacity is within normal limits. Normal total lung capacity.
        </p>
      </Card>
      <Card className="h-[352px] shrink-0">
        <div className="h-[54px] shrink-0 rounded-[10px] bg-[#007a8f] flex items-center justify-between pl-[13px] pr-[15px] text-xl text-[#e6f6f8]">
          <h2>Attending Interpretation: Attendings</h2>
          <button aria-label="Assign user" className="w-[62px] h-[46px] rounded-[20px] border-2 border-[#8c8c8c] bg-[#1a1a1a] flex items-center justify-center">
            <svg viewBox="0 0 32 24" className="w-8 h-6"><ellipse cx="10" cy="6.500" rx="5.500" ry="6" fill="#747474" /><path d="M0 23.500Q0 14 6 14.500Q10 16 14 14.500Q17 14.500 17 18v5.500z" fill="#747474" /><path d="M18 22l1-6 8-8 4.500 4-8 8zM28 7l2-2 2.500 3-1.500 2z" fill="#0a5a70" /></svg>
          </button>
        </div>
        <textarea aria-label="Attending interpretation" className="flex-1 resize-none rounded-[10px] bg-[#0b1214] p-2 outline-none" />
        <div className="h-9 shrink-0 flex gap-2.5 px-[7px] font-bold text-[15px]">
          <button className="flex-1 h-[34px] rounded-full border-2 border-white bg-[#0078ff]">Previous</button>
          <button className="flex-1 h-[34px] rounded-full border-2 border-white bg-[#0078ff]">Next</button>
          <button className="flex-1 h-[34px] rounded-full border-2 border-white bg-[#8a2be2]">Take Control</button>
        </div>
      </Card>
    </aside>
  );
}

export default function App() {
  return (
    <div className="h-screen overflow-hidden flex flex-col bg-[#2d2d2d] text-white font-['Lato','Noto_Sans',sans-serif]">
      <header className="h-7 shrink-0 flex items-center bg-[#0d1f2b] pl-[3px] pr-2 text-[17px]">
        <AppLogo />
        <span className="ml-2.5 flex-1">ComPAS2 TaskManager</span>
        <button aria-label="Minimize"><svg viewBox="0 0 10 10" className="size-2.5"><path d="M1 8.500h8" stroke="#fff" strokeWidth="2" /></svg></button>
        <button aria-label="Restore" className="ml-[21px]"><svg viewBox="0 0 11 11" className="size-[11px]"><path d="M3.500 3V1h6.500v6H8M1 3.500h6.500V10H1z" fill="none" stroke="#d5d9dc" strokeWidth="1.500" /></svg></button>
        <button aria-label="Close" className="ml-[21px]"><svg viewBox="0 0 10 10" className="size-2.5"><path d="M1.500 1.500l7 7M8.500 1.500l-7 7" stroke="#fff" strokeWidth="1.700" /></svg></button>
      </header>
      <div className="h-7 shrink-0 flex items-center bg-[#2d2d30] px-1">
        <nav className="flex-1 flex gap-3 px-px pt-0.5 text-[19px] leading-[26px]">
          <button>File</button>
          <button>Tools</button>
          <button>Help</button>
        </nav>
        <div className="flex items-center gap-2 text-base">
          <TriangleAlert className="size-6 text-[#8c4a33]" strokeWidth={2} />
          <span>Server unavailable</span>
        </div>
        <div className="flex-1 text-right text-[15px]">Nozomi Pulmonologist, MD</div>
      </div>
      <main className="flex-1 min-h-0 flex border-t border-[#6a6b70]">
        <Sidebar />
        <PatientList />
        <Viewer />
        <RightColumn />
      </main>
    </div>
  );
}
